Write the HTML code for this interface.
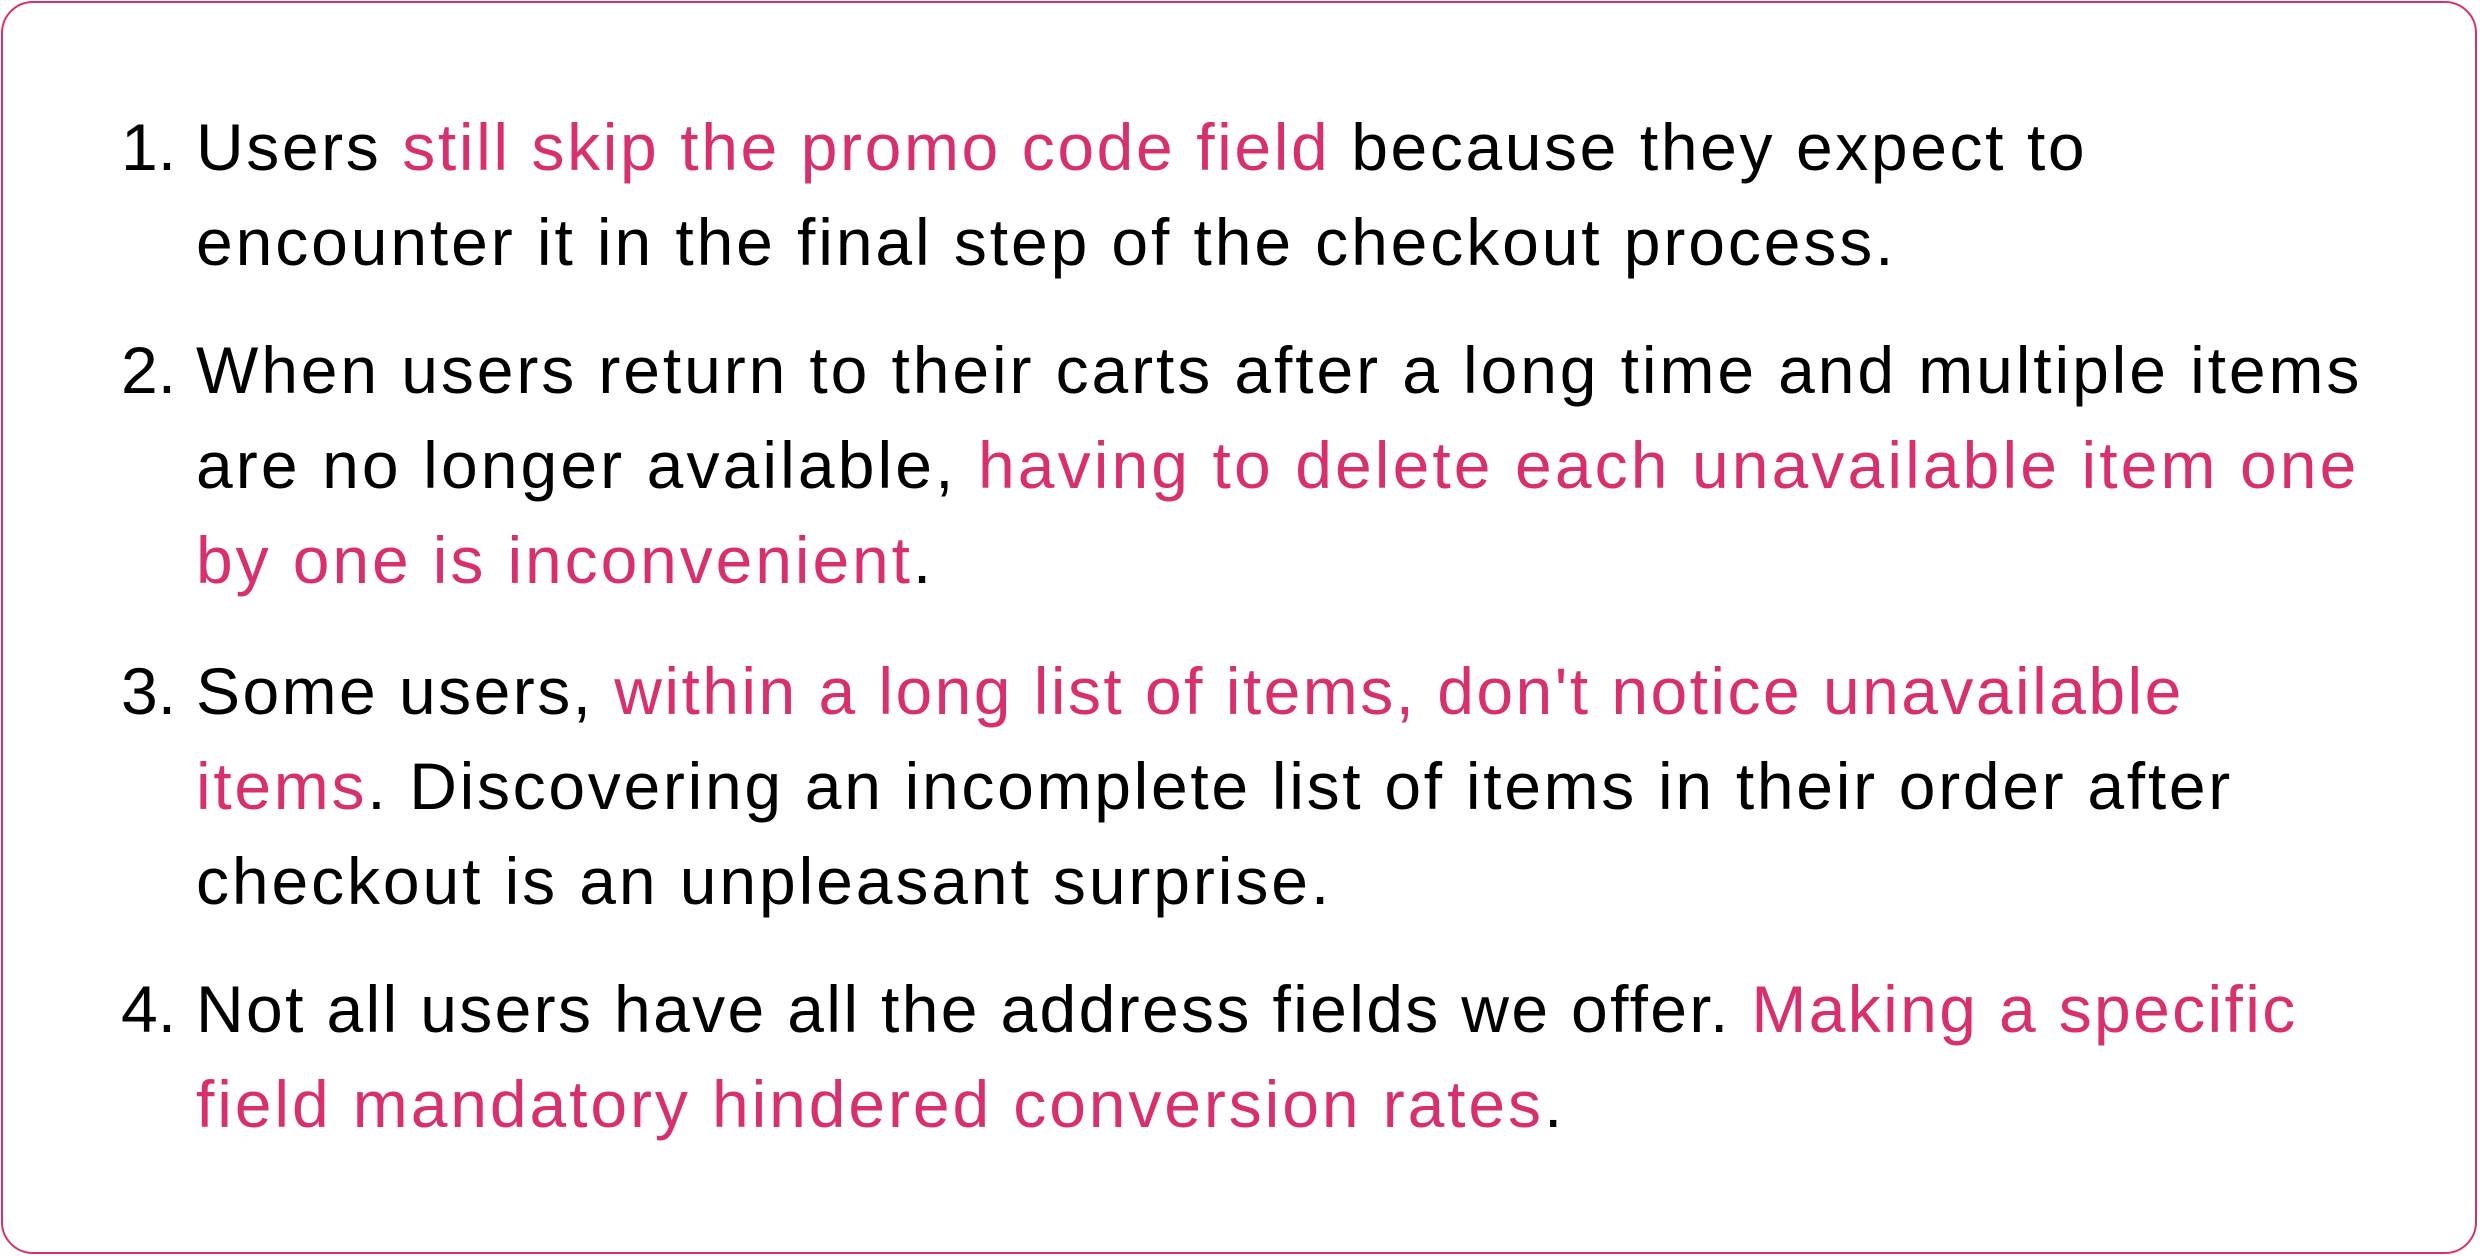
<!DOCTYPE html>
<html><head><meta charset="utf-8"><style>
html,body{margin:0;padding:0;background:#fff;}
body{width:2480px;height:1256px;position:relative;overflow:hidden;font-family:"Liberation Sans",sans-serif;}
.box{position:absolute;left:1px;top:1px;width:2476px;height:1253px;border:2px solid #d8306f;border-radius:32px;box-sizing:border-box;}
.l{position:absolute;left:196px;font-size:66px;letter-spacing:2.9px;white-space:nowrap;color:#000;line-height:1;}
.n{position:absolute;left:121px;font-size:66px;white-space:nowrap;color:#000;line-height:1;}
.p{color:#d8306f;}
</style></head><body>
<div class="box"></div>
<div class="n" style="top:114px">1.</div>
<div class="l" style="top:114px;letter-spacing:2.6px">Users <span class="p">still skip the promo code field</span> because they expect to</div>
<div class="l" style="top:209px">encounter it in the final step of the checkout process.</div>
<div class="n" style="top:337px">2.</div>
<div class="l" style="top:337px">When users return to their carts after a long time and multiple items</div>
<div class="l" style="top:432px;letter-spacing:3.1px">are no longer available, <span class="p">having to delete each unavailable item one</span></div>
<div class="l" style="top:527px"><span class="p">by one is inconvenient</span>.</div>
<div class="n" style="top:658px">3.</div>
<div class="l" style="top:658px;letter-spacing:2.45px">Some users, <span class="p">within a long list of items, don't notice unavailable</span></div>
<div class="l" style="top:753px;letter-spacing:2.7px"><span class="p">items</span>. Discovering an incomplete list of items in their order after</div>
<div class="l" style="top:848px">checkout is an unpleasant surprise.</div>
<div class="n" style="top:976px">4.</div>
<div class="l" style="top:976px;letter-spacing:2.35px">Not all users have all the address fields we offer. <span class="p">Making a specific</span></div>
<div class="l" style="top:1071px"><span class="p">field mandatory hindered conversion rates</span>.</div>
</body></html>
